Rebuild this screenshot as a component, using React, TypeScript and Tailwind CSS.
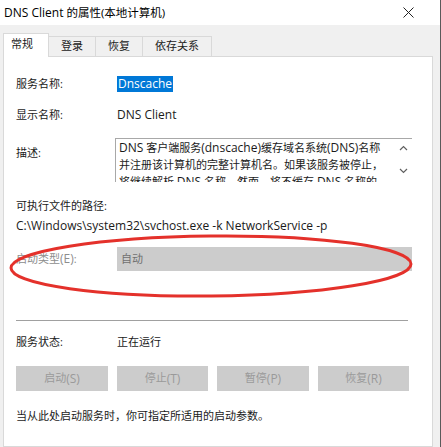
import React from "react";

const font = { fontFamily: '"Open Sans", "Noto Sans CJK SC", sans-serif' };

const tabs = ["常规", "登录", "恢复", "依存关系"];

const buttons = [
  { label: "启动", key: "(S)", w: "w-[92px]" },
  { label: "停止", key: "(T)", w: "w-[91px]" },
  { label: "暂停", key: "(P)", w: "w-[92px]" },
  { label: "恢复", key: "(R)", w: "w-[91px]" },
];

// Latin runs render a touch larger than the CJK text, as in the YaHei original
function L({ children }: { children: React.ReactNode }) {
  return <span className="text-[12px]">{children}</span>;
}

function Chevron({ up }: { up?: boolean }) {
  return (
    <svg width="9" height="6" viewBox="0 0 9 6" fill="none">
      <path
        d={up ? "M1 5l3.5-3.5L8 5" : "M1 1l3.5 3.5L8 1"}
        stroke="#606060"
        strokeWidth="1.2"
      />
    </svg>
  );
}

export default function App() {
  return (
    <div
      className="relative w-[441px] h-[447px] overflow-hidden bg-[#f0f0f0] flex text-[11px] text-[#1a1a1a]"
      style={font}
    >
      <div className="flex-1 flex flex-col">
        {/* Title bar */}
        <div className="h-[25px] bg-white flex items-center justify-between pl-[4px] pr-[26px]">
          <span className="text-[11.5px] leading-[16px] text-black">
            <L>DNS Client</L> 的属性(本地计算机)
          </span>
          <svg width="11" height="11" viewBox="0 0 11 11">
            <path d="M0.5 0.5l10 10M10.5 0.5l-10 10" stroke="#222" strokeWidth="1" />
          </svg>
        </div>

        <div className="flex-1 flex flex-col pl-[3px] pr-[7px] pt-[9px]">
          {/* Tabs */}
          <div className="flex items-end h-[23px] relative z-10 -mb-px">
            {tabs.map((t, i) =>
              i === 0 ? (
                <div
                  key={t}
                  className="h-[24px] px-[7px] w-[46px] bg-white border border-b-0 border-[#d9d9d9] flex items-center pb-[2px]"
                >
                  {t}
                </div>
              ) : (
                <div
                  key={t}
                  className="h-[21px] px-[12px] bg-[#f0f0f0] border border-l-0 border-[#d9d9d9] flex items-center"
                >
                  {t}
                </div>
              )
            )}
          </div>

          {/* Panel */}
          <div className="flex-1 bg-white border border-[#d9d9d9] pl-[12px] pr-[20px] flex flex-col">
            <div className="mt-[19px] flex h-[16px] items-center">
              <div className="w-[101px]">服务名称:</div>
              <span className="bg-[#0078d7] text-white px-[1px] leading-[16px]">
                <L>Dnscache</L>
              </span>
            </div>

            <div className="mt-[15px] flex h-[16px] items-center">
              <div className="w-[101px]">显示名称:</div>
              <L>DNS Client</L>
            </div>

            <div className="mt-[15px] flex">
              <div className="w-[99px] mt-[7px] leading-[16px]">描述:</div>
              <div className="flex-1 h-[44px] overflow-hidden border-t border-l border-[#a8a8a8] flex">
                <div className="flex-1 pl-[3px] leading-[17px] whitespace-nowrap overflow-hidden">
                  <div>
                    <L>DNS</L> 客户端服务<L>(dnscache)</L>缓存域名系统<L>(DNS)</L>名称
                  </div>
                  <div>并注册该计算机的完整计算机名。如果该服务被停止，</div>
                  <div>
                    将继续解析 <L>DNS</L> 名称。然而，将不缓存 <L>DNS</L> 名称的
                  </div>
                </div>
                <div className="w-[17px] flex flex-col items-center pt-[6px] gap-[17px]">
                  <Chevron up />
                  <Chevron />
                </div>
              </div>
            </div>

            <div className="mt-[16px] leading-[16px]">可执行文件的路径:</div>
            <div className="mt-[4px] leading-[16px] whitespace-nowrap">
              <L>C:\Windows\system32\svchost.exe -k NetworkService -p</L>
            </div>

            <div className="mt-[13px] flex items-center">
              <div className="w-[101px] text-[#8d8d8d]">
                启动类型<L>(E)</L>:
              </div>
              <div className="flex-1 h-[24px] bg-[#cccccc] flex items-center pl-[4px] text-[#707070]">自动</div>
            </div>

            <div className="mt-[49px] h-px bg-[#a0a0a0] mr-[4px]" />

            <div className="mt-[13px] flex h-[16px] items-center">
              <div className="w-[101px]">服务状态:</div>
              <span>正在运行</span>
            </div>

            <div className="mt-[16px] flex gap-[9px]">
              {buttons.map((b) => (
                <div
                  key={b.label}
                  className={`${b.w} h-[25px] bg-[#cccccc] flex items-center justify-center text-[#9a9a9a]`}
                >
                  {b.label}
                  <L>{b.key}</L>
                </div>
              ))}
            </div>

            <div className="mt-[17px] leading-[16px]">当从此处启动服务时，你可指定所适用的启动参数。</div>
          </div>
        </div>
      </div>
      <div className="w-px bg-[#5a5a5a]" />

      {/* Red annotation ellipse */}
      <svg className="absolute left-0 top-0 pointer-events-none" width="441" height="447">
        <ellipse
          cx="211"
          cy="266"
          rx="200"
          ry="30"
          fill="none"
          stroke="#e4312b"
          strokeWidth="3"
          transform="rotate(-0.6 211 266)"
        />
      </svg>
    </div>
  );
}
